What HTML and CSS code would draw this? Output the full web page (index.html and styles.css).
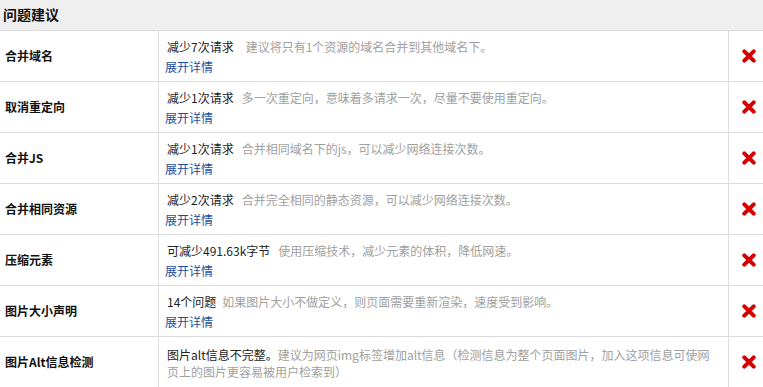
FILE: index.html
```html
<!DOCTYPE html>
<html lang="zh-CN">
<head>
<meta charset="utf-8">
<title>问题建议</title>
<link rel="stylesheet" href="styles.css">
</head>
<body>
<div class="panel">
  <div class="panel-head">问题建议</div>

  <div class="row">
    <div class="name">合并域名</div>
    <div class="detail">
      <p class="line"><span class="sum">减少7次请求</span><span class="desc wide">建议将只有1个资源的域名合并到其他域名下。</span></p>
      <a class="more" href="#">展开详情</a>
    </div>
    <div class="act"><svg class="x" viewBox="0 0 14 14" width="14" height="14"><path d="M2.3 2.3 L11.7 11.7 M11.7 2.3 L2.3 11.7" stroke="#d60000" stroke-width="4" stroke-linecap="round"/></svg></div>
  </div>

  <div class="row">
    <div class="name">取消重定向</div>
    <div class="detail">
      <p class="line"><span class="sum">减少1次请求</span><span class="desc">多一次重定向，意味着多请求一次，尽量不要使用重定向。</span></p>
      <a class="more" href="#">展开详情</a>
    </div>
    <div class="act"><svg class="x" viewBox="0 0 14 14" width="14" height="14"><path d="M2.3 2.3 L11.7 11.7 M11.7 2.3 L2.3 11.7" stroke="#d60000" stroke-width="4" stroke-linecap="round"/></svg></div>
  </div>

  <div class="row">
    <div class="name">合并JS</div>
    <div class="detail">
      <p class="line"><span class="sum">减少1次请求</span><span class="desc">合并相同域名下的js，可以减少网络连接次数。</span></p>
      <a class="more" href="#">展开详情</a>
    </div>
    <div class="act"><svg class="x" viewBox="0 0 14 14" width="14" height="14"><path d="M2.3 2.3 L11.7 11.7 M11.7 2.3 L2.3 11.7" stroke="#d60000" stroke-width="4" stroke-linecap="round"/></svg></div>
  </div>

  <div class="row">
    <div class="name">合并相同资源</div>
    <div class="detail">
      <p class="line"><span class="sum">减少2次请求</span><span class="desc">合并完全相同的静态资源，可以减少网络连接次数。</span></p>
      <a class="more" href="#">展开详情</a>
    </div>
    <div class="act"><svg class="x" viewBox="0 0 14 14" width="14" height="14"><path d="M2.3 2.3 L11.7 11.7 M11.7 2.3 L2.3 11.7" stroke="#d60000" stroke-width="4" stroke-linecap="round"/></svg></div>
  </div>

  <div class="row">
    <div class="name">压缩元素</div>
    <div class="detail">
      <p class="line"><span class="sum">可减少491.63k字节</span><span class="desc">使用压缩技术，减少元素的体积，降低网速。</span></p>
      <a class="more" href="#">展开详情</a>
    </div>
    <div class="act"><svg class="x" viewBox="0 0 14 14" width="14" height="14"><path d="M2.3 2.3 L11.7 11.7 M11.7 2.3 L2.3 11.7" stroke="#d60000" stroke-width="4" stroke-linecap="round"/></svg></div>
  </div>

  <div class="row">
    <div class="name">图片大小声明</div>
    <div class="detail">
      <p class="line"><span class="sum">14个问题</span><span class="desc narrow">如果图片大小不做定义，则页面需要重新渲染，速度受到影响。</span></p>
      <a class="more" href="#">展开详情</a>
    </div>
    <div class="act"><svg class="x" viewBox="0 0 14 14" width="14" height="14"><path d="M2.3 2.3 L11.7 11.7 M11.7 2.3 L2.3 11.7" stroke="#d60000" stroke-width="4" stroke-linecap="round"/></svg></div>
  </div>

  <div class="row">
    <div class="name">图片Alt信息检测</div>
    <div class="detail">
      <p class="line"><span class="sum">图片alt信息不完整。</span><span class="desc tight">建议为网页img标签增加alt信息（检测信息为整个页面图片，加入这项信息可使网<br>页上的图片更容易被用户检索到）</span></p>
    </div>
    <div class="act"><svg class="x" viewBox="0 0 14 14" width="14" height="14"><path d="M2.3 2.3 L11.7 11.7 M11.7 2.3 L2.3 11.7" stroke="#d60000" stroke-width="4" stroke-linecap="round"/></svg></div>
  </div>
</div>
</body>
</html>
```

FILE: styles.css
```css
html, body {
  margin: 0;
  padding: 0;
  background: #ffffff;
}

body {
  font-family: "Noto Sans CJK SC", "Liberation Sans", sans-serif;
  font-size: 12px;
  color: #222222;
  overflow: hidden;
}

.panel {
  width: 763px;
}

.panel-head {
  height: 31px;
  box-sizing: border-box;
  padding: 0 0 2px 3px;
  background: #efefef;
  border-bottom: 1px solid #dcdcdc;
  font-size: 14px;
  font-weight: bold;
  color: #111111;
  display: flex;
  align-items: center;
}

.row {
  display: grid;
  grid-template-columns: 159px 570px 34px;
  height: 51px;
  box-sizing: border-box;
  border-bottom: 1px solid #dcdcdc;
}

.name {
  box-sizing: border-box;
  border-right: 1px solid #dcdcdc;
  padding: 0 0 2px 5px;
  display: flex;
  align-items: center;
  font-weight: bold;
  color: #111111;
}

.detail {
  box-sizing: border-box;
  border-right: 1px solid #dcdcdc;
  padding: 1px 0 0 6px;
  display: flex;
  flex-direction: column;
  justify-content: center;
  align-items: stretch;
  min-width: 0;
}

.line {
  margin: 0 0 0 2px;
  line-height: 17px;
  white-space: nowrap;
}

.sum {
  color: #222222;
}

.desc {
  color: #a0a0a0;
  margin-left: 8px;
}

.desc.wide {
  margin-left: 12px;
}

.desc.narrow {
  margin-left: 6px;
}

.desc.tight {
  margin-left: 0;
}

.more {
  align-self: flex-start;
  margin-top: 3px;
  line-height: 17px;
  color: #1c4ea0;
  text-decoration: none;
}

.act {
  display: flex;
  align-items: center;
  padding: 0 0 1px 13px;
}

.x {
  display: block;
}
```
